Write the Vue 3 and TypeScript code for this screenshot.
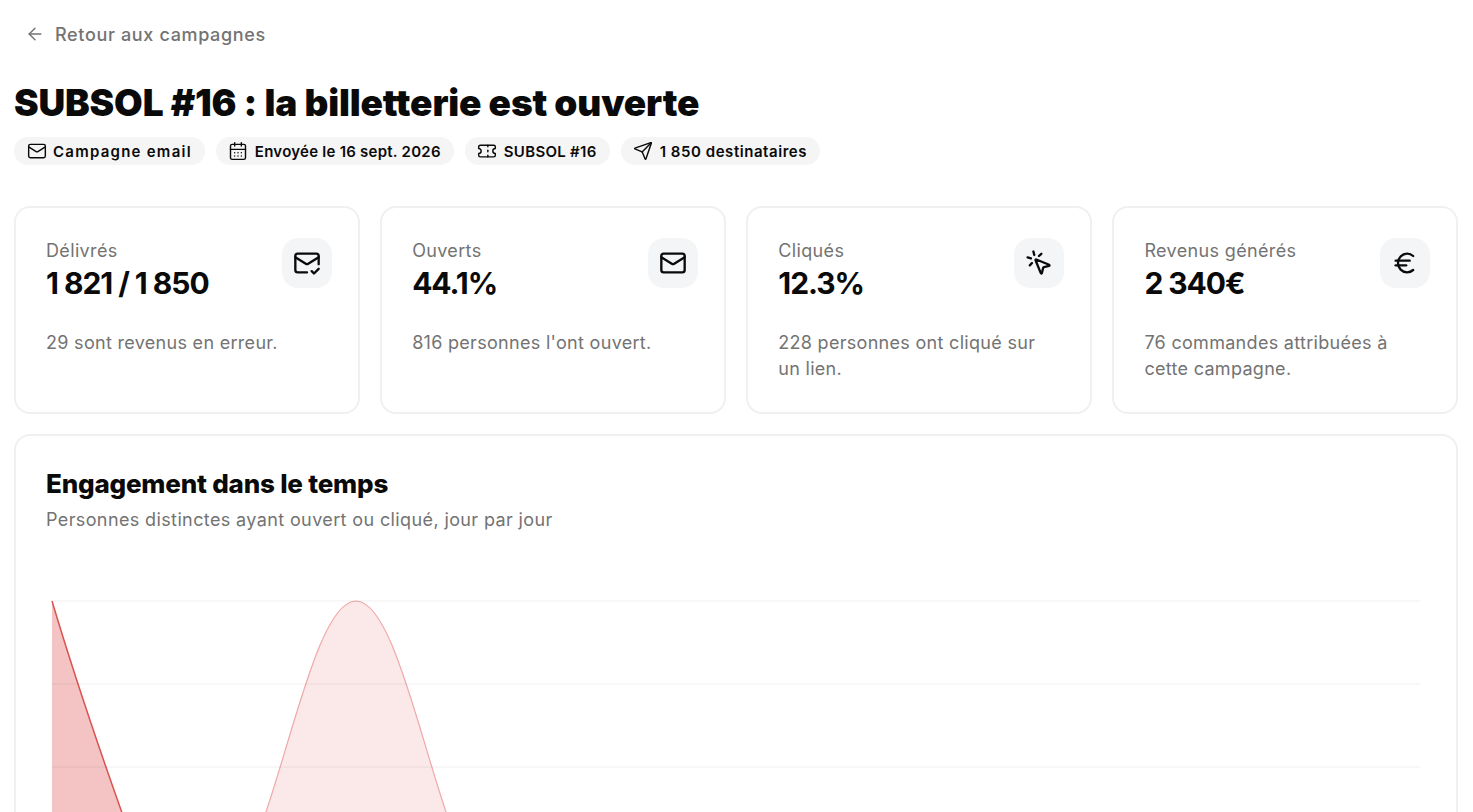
<template>
  <div class="page">
    <a class="back">
      <svg class="ic-back" viewBox="0 0 24 24"><path d="m12 19-7-7 7-7" /><path d="M19 12H5" /></svg>
      <span>Retour aux campagnes</span>
    </a>

    <h1 class="title">SUBSOL #16 : la billetterie est ouverte</h1>

    <div class="pills">
      <span v-for="p in pills" :key="p.label" class="pill">
        <svg class="ic-pill" viewBox="0 0 24 24"><path v-for="d in p.icon" :key="d" :d="d" /></svg>
        <span :style="{ letterSpacing: p.spacing + 'px' }">{{ p.label }}</span>
      </span>
    </div>

    <div class="stats">
      <div v-for="s in stats" :key="s.label" class="card stat">
        <div class="stat-head">
          <div>
            <div class="stat-label">{{ s.label }}</div>
            <div class="stat-value">{{ s.value }}</div>
          </div>
          <div class="stat-icon">
            <svg class="ic-stat" viewBox="0 0 24 24"><path v-for="d in s.icon" :key="d" :d="d" /></svg>
          </div>
        </div>
        <p class="stat-note">{{ s.note }}</p>
      </div>
    </div>

    <div class="card chart">
      <h2 class="chart-title">Engagement dans le temps</h2>
      <p class="chart-sub">Personnes distinctes ayant ouvert ou cliqué, jour par jour</p>
      <svg class="plot" width="1380" height="330" viewBox="0 0 1380 330">
        <path d="M6 11 C 26 78 50 150 80 234 L 80 322 L 6 322 Z" class="area-dark" />
        <path d="M6 11 C 26 78 50 150 80 234" class="line-dark" />
        <path d="M204 268 L220 222 C 250 132 276 11 310 11 C 344 11 370 132 400 222 L416 268 L 416 322 L 204 322 Z" class="area-light" />
        <path d="M204 268 L220 222 C 250 132 276 11 310 11 C 344 11 370 132 400 222 L416 268" class="line-light" />
        <line v-for="y in gridLines" :key="y" x1="6" x2="1374" :y1="y" :y2="y" class="grid" />
      </svg>
    </div>
  </div>
</template>

<script setup lang="ts">
const mail = [
  "M4 4h16a2 2 0 0 1 2 2v12a2 2 0 0 1-2 2H4a2 2 0 0 1-2-2V6a2 2 0 0 1 2-2z",
  "m22 7-8.97 5.7a1.94 1.94 0 0 1-2.06 0L2 7",
]

// the label font runs narrower than the design's, each pill gets its own tracking
const pills = [
  { label: "Campagne email", spacing: 1.25, icon: mail },
  {
    label: "Envoyée le 16 sept. 2026",
    spacing: 0.25,
    icon: [
      "M8 2v4", "M16 2v4",
      "M5 4h14a2 2 0 0 1 2 2v14a2 2 0 0 1-2 2H5a2 2 0 0 1-2-2V6a2 2 0 0 1 2-2z",
      "M3 10h18", "M8 14h.01", "M12 14h.01", "M16 14h.01", "M8 18h.01", "M12 18h.01", "M16 18h.01",
    ],
  },
  {
    label: "SUBSOL #16",
    spacing: 0.3,
    icon: [
      "M2 9a3 3 0 0 1 0 6v2a2 2 0 0 0 2 2h16a2 2 0 0 0 2-2v-2a3 3 0 0 1 0-6V7a2 2 0 0 0-2-2H4a2 2 0 0 0-2 2Z",
      "M13 5v2", "M13 17v2", "M13 11v2",
    ],
  },
  {
    label: "1 850 destinataires",
    spacing: 0.55,
    icon: [
      "M14.536 21.686a.5.5 0 0 0 .937-.024l6.5-19a.496.496 0 0 0-.635-.635l-19 6.5a.5.5 0 0 0-.024.937l7.93 3.18a2 2 0 0 1 1.112 1.11z",
      "m21.854 2.147-10.94 10.939",
    ],
  },
]

const stats = [
  {
    label: "Délivrés",
    value: "1 821 / 1 850",
    note: "29 sont revenus en erreur.",
    icon: [
      "M22 13V6a2 2 0 0 0-2-2H4a2 2 0 0 0-2 2v12c0 1.1.9 2 2 2h8",
      "m22 7-8.97 5.7a1.94 1.94 0 0 1-2.06 0L2 7",
      "m16 19 2 2 4-4",
    ],
  },
  { label: "Ouverts", value: "44.1%", note: "816 personnes l'ont ouvert.", icon: mail },
  {
    label: "Cliqués",
    value: "12.3%",
    note: "228 personnes ont cliqué sur un lien.",
    icon: [
      "M14 4.1 12 6", "m5.1 8-2.9-.8", "m6 12-1.9 2", "M7.2 2.2 8 5.1",
      "M9.037 9.69a.498.498 0 0 1 .653-.653l11 4.5a.5.5 0 0 1-.074.949l-4.349 1.041a1 1 0 0 0-.74.739l-1.04 4.35a.5.5 0 0 1-.95.074z",
    ],
  },
  {
    label: "Revenus générés",
    value: "2 340€",
    note: "76 commandes attribuées à cette campagne.",
    icon: [
      "M4 10h12", "M4 14h9",
      "M19 6a7.7 7.7 0 0 0-5.2-2A7.9 7.9 0 0 0 6 12c0 4.4 3.5 8 7.8 8 2 0 3.8-.8 5.2-2",
    ],
  },
]

const gridLines = [11, 94, 177]
</script>

<style>
html,
body {
  height: 812px;
  overflow: hidden;
}
</style>

<style scoped>
.page {
  padding: 0 15px 0 14px;
  font-family: Inter, "Noto Sans", sans-serif;
  color: #0a0a0a;
}

.back {
  display: flex;
  align-items: center;
  gap: 10px;
  height: 24px;
  margin-top: 22px;
  padding-left: 11px;
  font-size: 18px;
  font-weight: 500;
  letter-spacing: 0.65px;
  color: #737373;
}

.ic-back,
.ic-pill,
.ic-stat {
  fill: none;
  stroke: currentColor;
  stroke-width: 2;
  stroke-linecap: round;
  stroke-linejoin: round;
  flex: none;
}

.ic-back {
  width: 20px;
  height: 20px;
  stroke-width: 1.7;
}

.title {
  margin: 27px 0 0;
  font-size: 37px;
  line-height: 60px;
  font-weight: 900;
  letter-spacing: -0.15px;
}

.pills {
  display: flex;
  gap: 11px;
  margin-top: 4px;
}

.pill {
  display: flex;
  align-items: center;
  gap: 6.5px;
  height: 28px;
  padding: 0 13px 0 12.5px;
  border-radius: 14px;
  background: #f5f5f5;
  font-size: 15px;
  font-weight: 600;
}

.ic-pill {
  width: 20px;
  height: 20px;
  stroke-width: 1.7;
}

.stats {
  display: grid;
  grid-template-columns: repeat(4, 1fr);
  gap: 20.5px;
  margin-top: 41px;
}

.card {
  border: 2px solid #f0f0f0;
  border-radius: 16px;
  background: #fff;
  box-sizing: border-box;
}

.stat {
  height: 208px;
  padding: 30px 26px 0 30px;
}

.stat-head {
  display: flex;
  justify-content: space-between;
}

.stat-label {
  font-size: 18px;
  line-height: 26px;
  letter-spacing: 0.35px;
  color: #737373;
}

.stat-value {
  margin-top: 2px;
  font-size: 30px;
  line-height: 35px;
  font-weight: 700;
  letter-spacing: -0.035em;
}

.stat-icon {
  display: flex;
  align-items: center;
  justify-content: center;
  width: 50px;
  height: 50px;
  border-radius: 16px;
  background: #f3f5f7;
}

.ic-stat {
  width: 28px;
  height: 28px;
}

.stat-note {
  max-width: 272px;
  margin: 29px 0 0;
  font-size: 18px;
  line-height: 26px;
  letter-spacing: 0.3px;
  color: #737373;
}

.chart {
  margin-top: 20px;
  padding: 30px 30px 0;
}

.chart-title {
  margin: 0;
  font-size: 26px;
  line-height: 36px;
  font-weight: 800;
  letter-spacing: -0.2px;
}

.chart-sub {
  margin: 5px 0 0;
  font-size: 18px;
  line-height: 26px;
  letter-spacing: 0.38px;
  color: #737373;
}

.plot {
  display: block;
  margin-top: 57px;
}

.grid {
  stroke: rgba(0, 0, 0, 0.03);
  stroke-width: 2;
}

.area-dark {
  fill: #f4c4c4;
}

.line-dark {
  fill: none;
  stroke: #d9534f;
  stroke-width: 1.5;
}

.area-light {
  fill: #fbe8e8;
}

.line-light {
  fill: none;
  stroke: #efa8a8;
  stroke-width: 1.2;
}
</style>
